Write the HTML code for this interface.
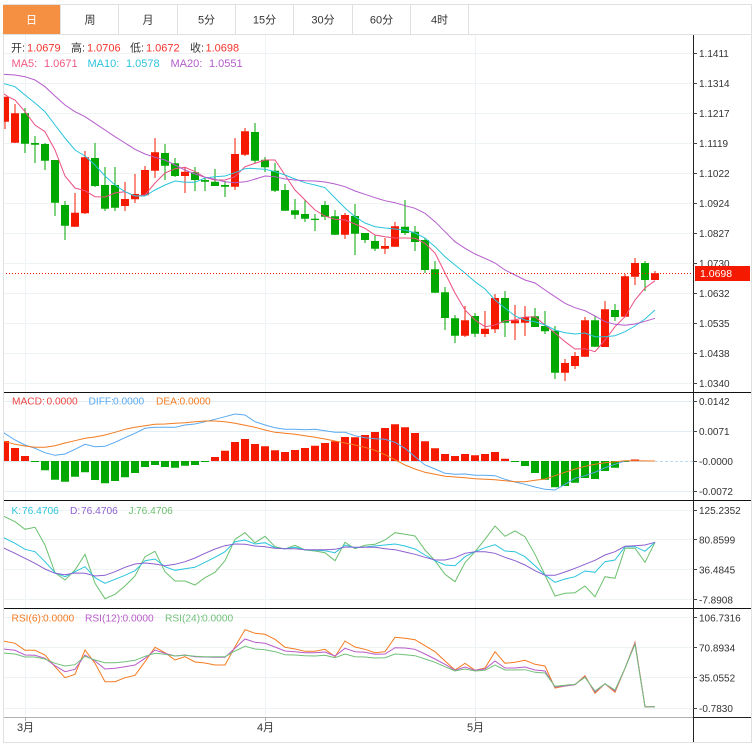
<!DOCTYPE html>
<html lang="zh">
<head>
<meta charset="utf-8">
<title>K线图</title>
<style>
html,body{margin:0;padding:0;background:#fff;width:754px;height:749px;overflow:hidden}
svg{display:block;position:absolute;left:0;top:0}
text{font-family:"Liberation Sans","Noto Sans CJK SC",sans-serif;font-size:11px}
.ax text{font-size:10px;fill:#333}
.pl text{font-size:10.2px}
</style>
</head>
<body>
<svg width="754" height="749" viewBox="0 0 754 749" xmlns="http://www.w3.org/2000/svg">
<defs>
<clipPath id="c"><rect x="3" y="35" width="690" height="682"/></clipPath>
</defs>

<!-- grid -->
<path fill="none" stroke="#eef3f5" stroke-width="1" d="M3 53.5H693M3 83.5H693M3 113.5H693M3 143.5H693M3 173.5H693M3 203.5H693M3 233.5H693M3 263.5H693M3 293.5H693M3 323.5H693M3 353.5H693M3 383.5H693M3 510.5H693M3 539.5H693M3 569.5H693M3 599.5H693M3 617.5H693M3 647.5H693M3 677.5H693M3 708.5H693M25.5 35V717M265.5 35V717M475.5 35V717"/>
<path fill="none" stroke="#e3eef4" stroke-width="1" d="M3 401.5H693M3 431.5H693M3 491.5H693"/>
<path fill="none" stroke="#d8e6ee" stroke-width="1" d="M3 461.5H520"/>
<path fill="none" stroke="#bcdcf2" stroke-width="1" stroke-dasharray="3,2" d="M655 461.5H693"/>

<g clip-path="url(#c)">
<!-- wicks -->
<path fill="none" stroke="#f51900" stroke-width="1" d="M5 97V129M15 104V143M75 193V227M85 151V214M125 182V211M135 174V203M145 166V195M155 138V178M185 167V193M235 138V190M245 128V156M345 213V239M385 238V254M395 222V247M465 306V337M485 311V337M495 294V333M515 305V340M525 306V336M565 359V381M575 352V369M585 317V357M605 301V347M625 274V317M635 258V285M655 271V280"/>
<path fill="none" stroke="#00a800" stroke-width="1" d="M25 108V153M35 136V163M45 143V170M55 160V216M65 201V240M95 143V187M105 167V211M115 167V211M165 144V180M175 158V177M195 167V191M205 177V191M215 169V186M225 181V197M255 123V163M265 157V172M275 163V192M285 184V211M295 199V219M305 200V222M315 214V231M325 201V220M335 210V235M355 204V255M365 233V243M375 235V251M405 200V235M415 226V251M425 238V273M435 261V293M445 287V330M455 315V343M475 313V337M505 291V337M535 308V327M545 311V334M555 326V379M595 316V347M615 304V321M645 261V291"/>
<!-- red bodies -->
<path fill="#f51900" d="M1 96.7H9V121.7H1ZM11 113.3H19V142.7H11ZM71 212.7H79V226.7H71ZM81 157.3H89V213.3H81ZM121 199H129V206H121ZM131 194H139V199.3H131ZM141 170H149V195.3H141ZM151 152.3H159V170.7H151ZM181 171.7H189V176H181ZM231 154H239V186.7H231ZM241 131.3H249V154.7H241ZM341 215H349V234.7H341ZM381 246H389V248.7H381ZM391 226.3H399V246.7H391ZM461 320.3H469V335.7H461ZM481 328.7H489V334H481ZM491 298H499V329.3H491ZM511 320.3H519V323.3H511ZM521 317.3H529V322.7H521ZM561 363H569V372.7H561ZM571 356H579V366H571ZM581 320.3H589V356.7H581ZM601 309.3H609V347H601ZM621 276.3H629V316.7H621ZM631 263H639V276.7H631ZM651 273.3H659V280H651Z"/>
<!-- green bodies -->
<path fill="#00a800" d="M21 113.3H29V143.7H21ZM31 143H39V144.7H31ZM41 144H49V160.7H41ZM51 160H59V202.7H51ZM61 205H69V225.7H61ZM91 158H99V186H91ZM101 185H109V208.7H101ZM111 185H119V207.7H111ZM161 153H169V165.7H161ZM171 163.3H179V176H171ZM191 172.3H199V180H191ZM201 180H209V181.7H201ZM211 181.7H219V186H211ZM221 185H229V186.7H221ZM251 132H259V160.7H251ZM261 159.7H269V167.3H261ZM271 170.7H279V190.7H271ZM281 190H289V210.7H281ZM291 210.3H299V214.7H291ZM301 214H309V218.7H301ZM311 218.7H319V220H311ZM321 205H329V216.7H321ZM331 216.3H339V234.7H331ZM351 216H359V233.7H351ZM361 233H369V240H361ZM371 241H379V248.7H371ZM401 226.7H409V233H401ZM411 231.7H419V242H411ZM421 240H429V270H421ZM431 269.3H439V292.7H431ZM441 292.3H449V318H441ZM451 318.3H459V335.7H451ZM471 316H479V333.7H471ZM501 298H509V322.7H501ZM531 316.3H539V327H531ZM541 326H549V331.3H541ZM551 330.7H559V372.7H551ZM591 320.3H599V346.7H591ZM611 310H619V317H611ZM641 263H649V280H641Z"/>

<!-- MA5 -->
<polyline fill="none" stroke="#ec4f81" stroke-width="1" points="3,93.3 8,96.7 15,100 25,111.7 35,125 45,131.7 55,150 65,176 75,188 85,190.7 95,196.7 105,197 115,193 125,191.7 135,196 145,195 155,183 165,173 175,168.7 185,167.3 195,171.7 205,177.3 215,180 225,180 235,176.7 245,166.7 250,165 265,160 275,160 285,175 295,190 305,200 315,210 325,216 335,219.3 345,220 355,224 365,228.3 375,235 385,236.7 395,238 405,238 415,238.3 425,243.3 435,253 445,273 455,293 465,310 475,320 485,326.7 495,325 505,320.7 515,320 525,317 535,317 545,325 555,333 565,341.7 575,349 585,348.7 595,351.7 605,340 615,326.7 625,316.7 635,300 645,288 655,280.7"/>
<!-- MA10 -->
<polyline fill="none" stroke="#2bc4dc" stroke-width="1" points="3,83.3 15,86.7 25,95 35,103 45,111.7 55,125 65,138 75,150 85,156 95,165 105,176 115,185 125,191.7 135,196 145,196 155,190 165,185 175,181 185,182.3 195,182.3 205,178 215,176.7 225,176 235,172.7 245,168.7 250,168.3 265,169.3 275,171.7 285,175 295,179 305,182.7 315,185 325,187.7 335,198 345,208 355,216.7 365,223 375,226.7 385,228 395,229 405,230 415,233 425,238 435,246.7 445,256.7 455,265 465,273 475,281.7 485,289 495,300 505,308 515,316 525,320 535,321.7 545,325 555,330 565,332.7 575,334 585,333 595,336.7 605,336.7 615,335.7 625,331.7 635,326 645,319 655,310"/>
<!-- MA20 -->
<polyline fill="none" stroke="#b45ccb" stroke-width="1" points="3,74.3 15,75 25,76.7 35,80 45,86.7 55,96 65,105 75,111.7 85,116.7 95,123.3 105,130 115,136.7 125,143 135,149.3 145,154 155,157.3 165,160 175,165 185,170 195,174 205,177.3 215,179.3 225,181.7 235,182.7 245,181.7 250,180.7 265,176 275,176.7 285,179 295,180 305,180.7 315,181 325,182 335,184 345,186.7 355,191 365,194.3 375,197.7 385,200.7 395,202.7 405,205.7 415,208.3 425,213.3 435,221.7 445,231.7 455,241.7 465,248.3 475,254 485,258.3 495,263 505,270 515,275 525,280 535,283 545,290 555,296.7 565,303.3 575,307.7 585,310.7 595,316 605,321.7 615,324.3 625,325.3 635,324 645,321.3 655,318.3"/>

<!-- MACD bars -->
<path fill="#f51900" d="M1 441H9V461H1ZM11 448H19V461H11ZM21 456H29V461H21ZM211 457H219V461H211ZM221 450.7H229V461H221ZM231 442H239V461H231ZM241 439H249V461H241ZM251 444H259V461H251ZM261 446.3H269V461H261ZM271 450.3H279V461H271ZM281 452H289V461H281ZM291 450H299V461H291ZM301 448H309V461H301ZM311 445.7H319V461H311ZM321 443H329V461H321ZM331 441.3H339V461H331ZM341 437H349V461H341ZM351 437.3H359V461H351ZM361 435H369V461H361ZM371 432H379V461H371ZM381 428H389V461H381ZM391 424.3H399V461H391ZM401 427.3H409V461H401ZM411 433H419V461H411ZM421 441.3H429V461H421ZM431 448.3H439V461H431ZM441 454H449V461H441ZM451 456H459V461H451ZM461 454H469V461H461ZM471 455.3H479V461H471ZM481 454H489V461H481ZM491 452H499V461H491ZM501 458.7H509V461H501ZM631 459.5H639V461H631Z"/>
<path fill="#00a800" d="M31 461H39V462H31ZM41 461H49V470.3H41ZM51 461H59V479.7H51ZM61 461H69V481.7H61ZM71 461H79V476.7H71ZM81 461H89V472.3H81ZM91 461H99V480H91ZM101 461H109V483.3H101ZM111 461H119V481H111ZM121 461H129V477.3H121ZM131 461H139V473H131ZM141 461H149V467H141ZM151 461H159V465H151ZM161 461H169V467H161ZM171 461H179V467.7H171ZM181 461H189V465.7H181ZM191 461H199V465H191ZM201 461H209V462H201ZM511 461H519V462H511ZM521 461H529V466H521ZM531 461H539V473H531ZM541 461H549V479.7H541ZM551 461H559V487.3H551ZM561 461H569V486H561ZM571 461H579V482.7H571ZM581 461H589V478H581ZM591 461H599V479H591ZM601 461H609V471H601ZM611 461H619V467.7H611ZM621 461H629V462H621Z"/>
<!-- DIFF -->
<polyline fill="none" stroke="#58a9f0" stroke-width="1" points="3,432.3 15,440 25,445 35,448.3 45,452.7 55,455.3 65,454 75,449.3 85,444.3 95,446.7 105,446.3 115,442.3 125,437.7 135,433.3 145,428.3 155,427.3 165,427.3 175,427.3 185,425 195,424 205,421.7 215,419.3 225,416.7 235,414 245,415 255,421.7 265,425 275,427.7 285,429.3 295,429.3 305,429.7 315,429.3 325,430.7 335,432.3 345,432.3 355,435.7 365,437.7 375,438.7 385,439.3 395,442.3 405,448.3 415,456.7 425,465 435,469 445,473.3 455,474.3 465,474 475,475.3 485,475.3 495,475.7 505,479.3 515,482 525,484.3 535,487 545,489.3 555,490 565,484.3 575,478.3 585,475.7 595,472.3 605,467.7 615,464.3 625,461 635,461 655,461"/>
<!-- DEA -->
<polyline fill="none" stroke="#f47b20" stroke-width="1" points="3,441 15,444.3 25,446 35,447.3 45,447.3 55,445.7 65,443 75,440.7 85,438.3 95,437 105,435 115,432.3 125,429.3 135,427.3 145,425.7 155,424.3 165,424 175,423.3 185,422.7 195,421.7 205,421 215,421 225,421.7 235,423.3 245,425.3 255,427.3 265,430 275,432.3 285,433.3 295,434.3 305,435.7 315,437.3 325,439 335,441 345,443 355,445 365,447.3 375,450.3 385,454.7 395,459.7 405,465 415,469 425,472.3 435,474.3 445,476.3 455,477 465,477.7 475,478.7 485,479.3 495,479.7 505,480.7 515,481.7 525,481.7 535,480.3 545,479 555,475.7 565,472.3 575,469 585,466.3 595,464.3 605,462.7 615,461.7 625,460.7 635,460.7 655,461"/>

<!-- KDJ -->
<polyline fill="none" stroke="#6cc06e" stroke-width="1" points="3,516 15,521.7 25,529.3 35,527.3 45,545 55,572.7 65,580 75,570 85,554.3 95,583.3 105,598.7 115,594.3 125,586 135,576 145,556.7 155,551.3 165,571.7 175,581 185,581 195,585 205,577.7 215,572.3 225,560.7 235,539.3 245,532.7 255,542.7 265,536.3 275,546.7 285,549 295,545.3 305,550 315,551 325,552.7 335,560.7 345,542.3 355,548.7 365,545.3 375,544.3 385,540 395,532.7 405,534.3 415,536 425,550 435,560.7 445,574.3 455,581.7 465,562.7 475,551.7 485,539.3 495,526 505,536.3 515,531 525,536.7 535,554.3 545,575 555,596 565,593.3 575,592.7 585,586 595,596.7 605,576.7 615,578.3 625,548.3 635,548.3 645,562.3 655,542.3"/>
<polyline fill="none" stroke="#2bc4dc" stroke-width="1" points="3,537.3 15,543.3 25,549.3 35,551.7 45,561.7 55,572.7 65,576.7 75,571.7 85,566.7 95,577.7 105,583.3 115,579.3 125,575.3 135,570.7 145,560.7 155,559 165,566.7 175,570.3 185,568.7 195,567.3 205,562.3 215,557.3 225,551.7 235,541.7 245,540 255,544 265,542.7 275,547.7 285,548.7 295,547.3 305,549.7 315,550.3 325,550.7 335,552.7 345,545 355,547.7 365,547 385,545 395,544 405,546 415,549 425,555 435,560.7 445,565 455,565.7 465,556.7 475,551.7 485,547.7 495,544.7 505,551 515,551.7 525,556.7 535,565.7 545,575 555,582.3 565,579 575,576.7 585,571 595,572.3 605,561.7 615,560 625,546.7 635,546.7 645,551.3 655,542.3"/>
<polyline fill="none" stroke="#8c5fcf" stroke-width="1" points="3,547.7 15,553.3 25,558.3 35,563.3 45,569 55,573.3 65,574.7 75,573 85,573.3 95,576 105,575.3 115,571.7 125,567.3 135,564 145,563 155,564 165,565.7 175,564.3 185,561.7 195,558 205,553.3 215,549 225,545.7 235,544 245,544.3 255,546 265,546.7 275,548.3 285,548.7 295,548.7 305,549.7 315,549.7 325,549.7 335,549.3 345,547 355,547.3 375,547.3 385,548.7 395,549.7 405,552 415,554.3 425,557.3 435,560 445,560 455,557.7 465,553.3 475,551.7 485,551.7 495,553.3 505,557.3 515,560.7 525,565 535,570.7 545,575.3 555,575.3 565,572 575,568.3 585,564.3 595,560.3 605,555 615,551.7 625,546.3 635,545.7 645,545 655,542.3"/>

<!-- RSI -->
<polyline fill="none" stroke="#f47b20" stroke-width="1" points="3,641 15,643.3 25,650.3 35,650.3 45,655 55,666.7 65,677.7 75,674.3 85,650 95,663.3 105,681.7 115,681.7 125,677.7 135,675.3 145,661.7 155,647.3 165,652.7 175,660 185,656.7 195,662 205,663 215,665 225,665 235,646.7 245,629.7 255,633.3 265,634.3 275,639.3 285,647.3 295,649 305,651.3 315,651.3 325,649.3 335,656.7 345,641 355,647 365,649.3 375,652.7 385,651.7 395,637.3 405,638.3 415,639.7 425,645.7 435,651.7 445,661 455,670 465,663.3 475,670.3 485,668 495,651.7 505,663.3 515,662.3 525,660.3 535,664.3 545,666 555,688 565,686 575,684.7 585,675.7 595,693.3 605,683.7 615,692.3 625,668.3 635,642.3 645,706.7 655,706.7"/>
<polyline fill="none" stroke="#b85cc8" stroke-width="1" points="3,649 15,650.3 25,655 35,655.3 45,658.3 55,665.7 65,671.7 75,669.3 85,655 95,661 105,669 115,668.3 125,666.7 135,665 145,658.3 155,650 165,653.3 175,656 185,655 195,656.7 205,657 215,657.3 225,657.3 235,648.3 245,639 255,642.3 265,643.3 275,647 285,651 295,651.7 305,652.7 315,652.7 325,652 335,656 345,648.3 355,651.7 365,652.3 375,654.3 385,654 395,647.7 405,648 415,649.3 425,654 435,659 445,664.3 455,670.3 465,667 475,670.3 485,669 495,661 505,668 515,668 525,667 535,670 545,671 555,687 565,686 575,684.7 585,676.7 595,692 605,683.7 615,691 625,668.3 635,643.3 645,706.7 655,706.7"/>
<polyline fill="none" stroke="#72c07a" stroke-width="1" points="3,653 15,654 25,657 35,657 45,659 55,663.3 65,666 75,664.7 85,656.3 95,660 105,662.7 115,662.7 125,661.7 135,660.3 145,656.3 155,653.3 165,654.3 175,656 185,655.3 195,656.3 205,656.7 215,656.7 225,656.7 235,651 245,646.3 255,649 265,649.7 275,651.7 285,654.7 295,655 305,655.7 315,656 325,655.3 335,657.7 345,654 355,656.7 365,657 375,658 385,657.7 395,654 405,654.7 415,655.7 425,659 435,662.3 445,666.7 455,671 465,669 475,671 485,670.3 495,665 505,670 515,670 525,669.7 535,672.3 545,673 555,686.3 565,685.3 575,684.3 585,677.3 595,691 605,683.7 615,690 625,668.3 635,644.3 645,706.7 655,706.7"/>

<path fill="none" stroke="#f51900" stroke-width="1" stroke-dasharray="1,2" d="M3 273.5H695"/>
</g>

<!-- pane separators -->
<path fill="none" stroke="#111" stroke-width="1" d="M3 392.5H751M3 500.5H751M3 608.5H751"/>
<path fill="none" stroke="#b0b0b0" stroke-width="1" d="M3 717.5H693M25.5 717V721M265.5 717V721M475.5 717V721"/>
<path fill="none" stroke="#222" stroke-width="1" d="M693.5 35V742M693 717.5H751"/>
<!-- axis ticks -->
<path fill="none" stroke="#444" stroke-width="1" d="M693 53.5H697M693 83.5H697M693 113.5H697M693 143.5H697M693 173.5H697M693 203.5H697M693 233.5H697M693 263.5H697M693 293.5H697M693 323.5H697M693 353.5H697M693 383.5H697M693 401.5H697M693 431.5H697M693 461.5H697M693 491.5H697M693 510.5H697M693 539.5H697M693 569.5H697M693 599.5H697M693 617.5H697M693 647.5H697M693 677.5H697M693 708.5H697"/>

<!-- frame -->
<path fill="none" stroke="#e0e0e0" stroke-width="1" d="M3.5 4.5H751.5V742.5H3.5Z"/>
<path fill="none" stroke="#e0e0e0" stroke-width="1" d="M3 34.5H751M60.5 5V34M118.5 5V34M177.5 5V34M235.5 5V34M293.5 5V34M352.5 5V34M410.5 5V34M468.5 5V34"/>
<rect x="3" y="5" width="57" height="29" fill="#f58f42"/>

<!-- tabs -->
<g text-anchor="middle" fill="#333">
<text x="31.5" y="23.5" fill="#fff">日</text>
<text x="90" y="23.5">周</text>
<text x="148" y="23.5">月</text>
<text x="206.5" y="23.5">5分</text>
<text x="264.5" y="23.5">15分</text>
<text x="323" y="23.5">30分</text>
<text x="381.5" y="23.5">60分</text>
<text x="439.5" y="23.5">4时</text>
</g>

<!-- legend main -->
<g fill="#333">
<text x="11" y="51.5">开:</text><text x="71" y="51.5">高:</text><text x="130" y="51.5">低:</text><text x="190" y="51.5">收:</text>
</g>
<g fill="#f5332b">
<text x="27" y="51.5">1.0679</text><text x="87" y="51.5">1.0706</text><text x="146" y="51.5">1.0672</text><text x="205.5" y="51.5">1.0698</text>
</g>
<text x="11.5" y="67" fill="#ee5a85">MA5:</text><text x="44" y="67" fill="#ee5a85">1.0671</text>
<text x="87.5" y="67" fill="#2bc4dc">MA10:</text><text x="126" y="67" fill="#2bc4dc">1.0578</text>
<text x="170.5" y="67" fill="#b45ccb">MA20:</text><text x="209" y="67" fill="#b45ccb">1.0551</text>

<g class="pl">
<!-- legend MACD -->
<text x="12" y="404.5" fill="#f04545">MACD:</text><text x="46.5" y="404.5" fill="#f04545">0.0000</text>
<text x="88.5" y="404.5" fill="#58a9f0">DIFF:</text><text x="113" y="404.5" fill="#58a9f0">0.0000</text>
<text x="156" y="404.5" fill="#f47b20">DEA:</text><text x="179.5" y="404.5" fill="#f47b20">0.0000</text>

<!-- legend KDJ -->
<text x="11.5" y="514" fill="#2bc4dc">K:</text><text x="22" y="514" fill="#2bc4dc">76.4706</text>
<text x="70" y="514" fill="#8c5fcf">D:</text><text x="81" y="514" fill="#8c5fcf">76.4706</text>
<text x="128.5" y="514" fill="#6cc06e">J:</text><text x="136" y="514" fill="#6cc06e">76.4706</text>

<!-- legend RSI -->
<text x="11.5" y="621.5" fill="#f47b20">RSI(6):</text><text x="43" y="621.5" fill="#f47b20">0.0000</text>
<text x="85" y="621.5" fill="#b85cc8">RSI(12):</text><text x="122.5" y="621.5" fill="#b85cc8">0.0000</text>
<text x="165" y="621.5" fill="#72c07a">RSI(24):</text><text x="202" y="621.5" fill="#72c07a">0.0000</text>
</g>

<!-- axis labels -->
<g class="ax">
<text x="699" y="57">1.1411</text>
<text x="699" y="87">1.1314</text>
<text x="699" y="117">1.1217</text>
<text x="699" y="147">1.1119</text>
<text x="699" y="177">1.1022</text>
<text x="699" y="207">1.0924</text>
<text x="699" y="237">1.0827</text>
<text x="699" y="267">1.0730</text>
<text x="699" y="297">1.0632</text>
<text x="699" y="327">1.0535</text>
<text x="699" y="357">1.0438</text>
<text x="699" y="387">1.0340</text>
<text x="699" y="405">0.0142</text>
<text x="699" y="435">0.0071</text>
<text x="699" y="465">-0.0000</text>
<text x="699" y="495">-0.0072</text>
<text x="699" y="514">125.2352</text>
<text x="699" y="543.5">80.8599</text>
<text x="699" y="573.5">36.4845</text>
<text x="699" y="603.5">-7.8908</text>
<text x="699" y="621.5">106.7316</text>
<text x="699" y="651.5">70.8934</text>
<text x="699" y="681.5">35.0552</text>
<text x="699" y="712">-0.7830</text>
</g>

<!-- price tag -->
<rect x="695" y="266" width="55" height="15" fill="#f51900"/>
<text x="700" y="277" fill="#fff" style="font-size:10.5px">1.0698</text>

<!-- x axis labels -->
<g text-anchor="middle" fill="#333">
<text x="25.5" y="731">3月</text>
<text x="265.5" y="731">4月</text>
<text x="475.5" y="731">5月</text>
</g>
</svg>
</body>
</html>
